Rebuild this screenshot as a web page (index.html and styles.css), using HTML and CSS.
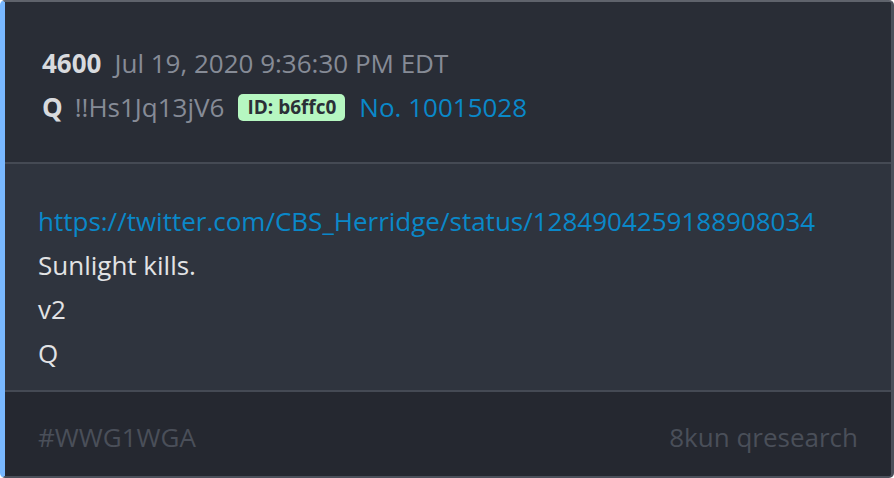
FILE: index.html
```html
<!DOCTYPE html>
<html>
<head>
<meta charset="utf-8">
<link rel="stylesheet" href="styles.css">
</head>
<body>
<div class="card">
  <div class="header">
    <div class="row">
      <span class="num">4600</span>
      <span class="date">Jul 19, 2020 9:36:30 PM EDT</span>
    </div>
    <div class="row">
      <span class="author">Q</span>
      <span class="trip">!!Hs1Jq13jV6</span>
      <span class="badge">ID: b6ffc0</span>
      <span class="postno">No. 10015028</span>
    </div>
  </div>
  <div class="body">
    <div class="line link">https://twitter.com/CBS_Herridge/status/1284904259188908034</div>
    <div class="line">Sunlight kills.</div>
    <div class="line">v2</div>
    <div class="line">Q</div>
  </div>
  <div class="footer">
    <span>#WWG1WGA</span>
    <span>8kun qresearch</span>
  </div>
</div>
</body>
</html>
```

FILE: styles.css
```css
html, body {
  margin: 0;
  padding: 0;
  background: #ffffff;
}
body {
  font-family: "Open Sans", "Noto Sans", sans-serif;
  font-size: 26px;
}
.card {
  box-sizing: border-box;
  width: 894px;
  height: 478px;
  border-style: solid;
  border-width: 2px 3px 2px 5px;
  border-color: #5f636c #4b505a #4b505a #79b8ff;
  border-radius: 5px;
  display: flex;
  flex-direction: column;
  overflow: hidden;
  background: #252830;
}
.header {
  background: #292d36;
  height: 162px;
  flex-shrink: 0;
  box-sizing: border-box;
  padding: 43px 0 0 37px;
  border-bottom: 2px solid #454a54;
  display: flex;
  flex-direction: column;
  gap: 8px;
}
.row {
  display: flex;
  align-items: center;
  line-height: 36px;
  white-space: nowrap;
}
.num {
  font-weight: 700;
  color: #d8dade;
  margin-right: 13px;
}
.date {
  color: #868b96;
}
.author {
  font-weight: 700;
  color: #d8dade;
  margin-right: 12px;
}
.trip {
  color: #868b96;
  margin-right: 14px;
}
.badge {
  background: #b6f7c1;
  color: #2b2f37;
  font-weight: 700;
  font-size: 19px;
  line-height: 27px;
  padding: 0 9px;
  border-radius: 5px;
  margin-right: 14px;
}
.postno {
  color: #0a88c9;
}
.body {
  background: #2f343e;
  height: 228px;
  flex-shrink: 0;
  box-sizing: border-box;
  padding: 39px 0 0 33px;
  border-bottom: 2px solid #454a54;
  display: flex;
  flex-direction: column;
  gap: 8px;
}
.line {
  color: #e2e3e5;
  line-height: 36px;
  white-space: nowrap;
}
.link {
  color: #0a88c9;
}
.footer {
  flex: 1;
  background: #252830;
  display: flex;
  justify-content: space-between;
  align-items: center;
  padding: 6px 33px 0 33px;
  color: #4a4f59;
}
```
